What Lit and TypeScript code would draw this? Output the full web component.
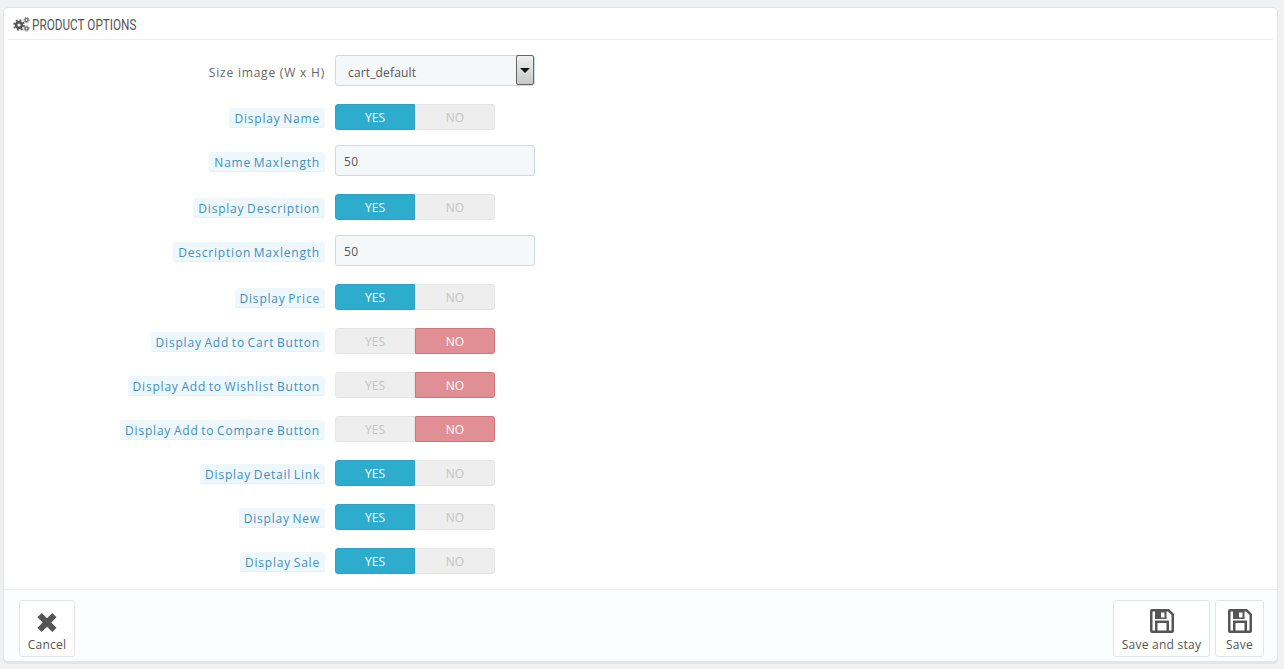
import { LitElement, html, css } from "lit";
import { customElement } from "lit/decorators.js";

type Row =
  | { kind: "switch"; label: string; on: boolean }
  | { kind: "input"; label: string; value: string };

const rows: Row[] = [
  { kind: "switch", label: "Display Name", on: true },
  { kind: "input", label: "Name Maxlength", value: "50" },
  { kind: "switch", label: "Display Description", on: true },
  { kind: "input", label: "Description Maxlength", value: "50" },
  { kind: "switch", label: "Display Price", on: true },
  { kind: "switch", label: "Display Add to Cart Button", on: false },
  { kind: "switch", label: "Display Add to Wishlist Button", on: false },
  { kind: "switch", label: "Display Add to Compare Button", on: false },
  { kind: "switch", label: "Display Detail Link", on: true },
  { kind: "switch", label: "Display New", on: true },
  { kind: "switch", label: "Display Sale", on: true },
];

const saveIcon = html`<svg class="ico" viewBox="0 0 24 24" width="24" height="24">
  <path fill="#555" fill-rule="evenodd" d="M2 0h17l5 5v17a2 2 0 0 1-2 2H2a2 2 0 0 1-2-2V2a2 2 0 0 1 2-2zM2.500 2.500v19h2.500v-10h14v10h2.500V6L18 2.500h-1.500V10H5V2.500zM7.500 14v7.500h9V14zM11 3.500v5h3.500v-5z"/>
</svg>`;

@customElement("app-root")
export class AppRoot extends LitElement {
  static styles = css`
    :host {
      display: block;
      height: 669px;
      box-sizing: border-box;
      padding: 7px 6px 7px 3px;
      background: #eff1f2;
      font-family: "Open Sans", sans-serif;
      font-size: 12px;
      color: #666;
      overflow: hidden;
    }
    .panel {
      height: 100%;
      box-sizing: border-box;
      display: flex;
      flex-direction: column;
      background: #fff;
      border: 1px solid #e3e5e6;
      border-radius: 5px;
      box-shadow: 0 2px 0 rgba(0, 0, 0, 0.05);
    }
    .head {
      margin: 0 4px;
      height: 29px;
      display: flex;
      align-items: center;
      gap: 2px;
      border-bottom: 1px solid #eee;
      padding: 2px 5px 0;
      flex: none;
    }
    .title {
      font-family: "Roboto", sans-serif;
      font-size: 14px;
      color: #555;
      text-transform: uppercase;
      display: inline-block;
      transform: scaleX(0.84);
      transform-origin: left center;
      white-space: nowrap;
      padding-top: 1px;
    }
    .form {
      flex: 1;
      padding-top: 15px;
      display: flex;
      flex-direction: column;
      gap: 15px;
    }
    .row {
      display: grid;
      grid-template-columns: 321px 1fr;
      column-gap: 10px;
      align-items: start;
    }
    .row.sw {
      padding-top: 3px;
    }
    .row.sw .lab {
      margin-top: 4px;
    }
    .lab {
      justify-self: end;
      letter-spacing: 0.8px;
      word-spacing: -1.2px;
      line-height: 20px;
      white-space: nowrap;
      margin-top: 7px;
    }
    .lab.plain {
      padding-top: 1px;
      letter-spacing: 0.8px;
      word-spacing: 0;
    }
    .hint {
      display: inline-block;
      background: #eef7fc;
      color: #3f90c2;
      padding: 2px 5px 0;
      border-radius: 3px;
      box-shadow: inset 0 -1px 0 #e4f1f9;
      line-height: 18px;
    }
    .field {
      width: 200px;
      height: 31px;
      box-sizing: border-box;
      background: #f5f8f9;
      border: 1px solid #ccdbe0;
      border-radius: 3px;
      padding: 2px 8px 0;
      font: 12px "Open Sans", sans-serif;
      letter-spacing: 0.3px;
      color: #555;
      display: block;
      outline: none;
    }
    .selwrap {
      position: relative;
      width: 200px;
    }
    select.field {
      appearance: none;
      padding: 4px 12px 0;
      letter-spacing: 0.15px;
    }
    .arrow {
      position: absolute;
      right: 1px;
      top: 0;
      width: 18px;
      height: 30px;
      box-sizing: border-box;
      border: 1px solid #666;
      border-radius: 2px;
      background: linear-gradient(#f0f0f0, #c8c8c8);
      display: flex;
      align-items: center;
      justify-content: center;
      pointer-events: none;
    }
    .arrow::after {
      content: "";
      border: 5px solid transparent;
      border-top: 5px solid #111;
      border-bottom: 0;
    }
    .switch {
      display: flex;
      width: 160px;
      height: 26px;
    }
    .opt {
      width: 80px;
      box-sizing: border-box;
      display: flex;
      align-items: center;
      justify-content: center;
      background: #eee;
      border: 1px solid #e4e4e4;
      color: #c4c4c4;
      font-size: 12px;
    }
    .opt:first-child {
      border-radius: 3px 0 0 3px;
    }
    .opt:last-child {
      border-radius: 0 3px 3px 0;
    }
    .opt.yes {
      background: #2eacce;
      border-color: #2aa3c4;
      color: #fff;
    }
    .opt.no {
      background: #e08f95;
      border-color: #d5727a;
      color: #fff;
    }
    .foot {
      flex: none;
      height: 72px;
      box-sizing: border-box;
      border-top: 1px solid #eee;
      background: #fcfdfe;
      border-radius: 0 0 5px 5px;
      padding: 10px 13px 0 15px;
      display: flex;
      gap: 5px;
    }
    .spacer {
      flex: 1;
    }
    button {
      height: 57px;
      box-sizing: border-box;
      background: #fff;
      border: 1px solid #e4e4e4;
      border-radius: 3px;
      display: flex;
      flex-direction: column;
      align-items: center;
      padding: 8px 0 0;
      font: 12px "Open Sans", sans-serif;
      letter-spacing: 0.25px;
      color: #555;
      gap: 3px;
    }
    .cancel { width: 56px; }
    .stay { width: 97px; }
    .save { width: 49px; }
    .ico { display: block; flex: none; }
  `;

  render() {
    return html`<div class="panel">
      <div class="head">
        <svg width="17" height="15" viewBox="0 0 17 15">
          <g fill="none" stroke="#555">
            <circle cx="6" cy="8" r="2.900" stroke-width="2.600"/>
            <circle cx="6" cy="8" r="5" stroke-width="1.600" stroke-dasharray="1.960 1.960"/>
            <circle cx="13.500" cy="3" r="1.500" stroke-width="1.200"/>
            <circle cx="13.500" cy="3" r="2.600" stroke-width="1" stroke-dasharray="1.020 1.020"/>
            <circle cx="13.500" cy="11.500" r="1.500" stroke-width="1.200"/>
            <circle cx="13.500" cy="11.500" r="2.600" stroke-width="1" stroke-dasharray="1.020 1.020"/>
          </g>
        </svg>
        <span class="title">Product options</span>
      </div>
      <div class="form">
        <div class="row">
          <label class="lab plain">Size image (W x H)</label>
          <div class="selwrap">
            <select class="field"><option>cart_default</option></select>
            <span class="arrow"></span>
          </div>
        </div>
        ${rows.map((r) =>
          r.kind === "switch"
            ? html`<div class="row sw">
                <label class="lab"><span class="hint">${r.label}</span></label>
                <div class="switch">
                  <span class="opt ${r.on ? "yes" : ""}">YES</span>
                  <span class="opt ${r.on ? "" : "no"}">NO</span>
                </div>
              </div>`
            : html`<div class="row">
                <label class="lab"><span class="hint">${r.label}</span></label>
                <input class="field" .value=${r.value} />
              </div>`
        )}
      </div>
      <div class="foot">
        <button class="cancel">
          <svg class="ico" width="24" height="24" viewBox="0 0 24 24">
            <path fill="none" stroke="#555" stroke-width="6" stroke-linejoin="round" d="M4.600 6.100 19.400 20.900M19.400 6.100 4.600 20.900"/>
          </svg>
          Cancel
        </button>
        <span class="spacer"></span>
        <button class="stay">${saveIcon}Save and stay</button>
        <button class="save">${saveIcon}Save</button>
      </div>
    </div>`;
  }
}
